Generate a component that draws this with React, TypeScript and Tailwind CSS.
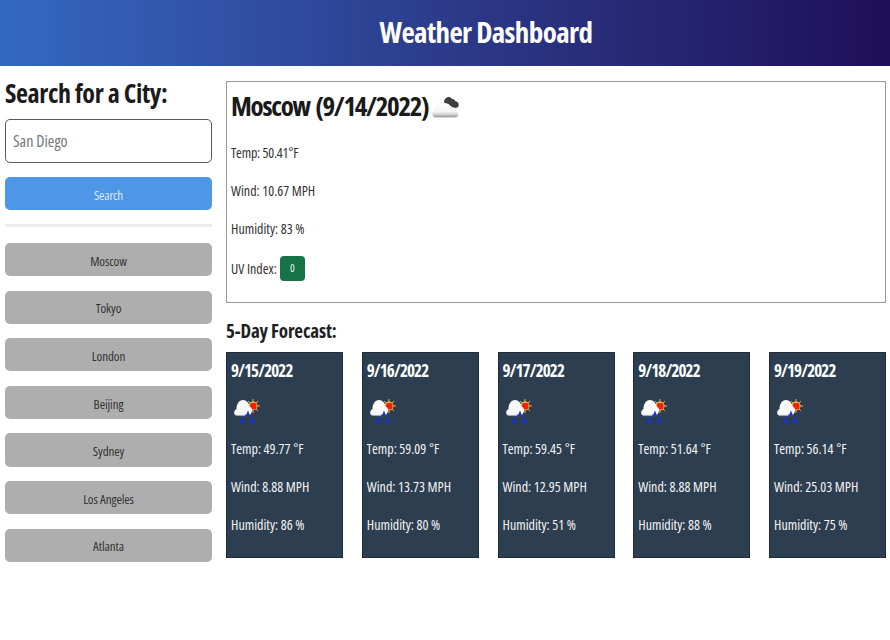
const cities = ["Moscow", "Tokyo", "London", "Beijing", "Sydney", "Los Angeles", "Atlanta"];
const days = [
  { d: "9/15/2022", t: "49.77", w: "8.88", h: "86" },
  { d: "9/16/2022", t: "59.09", w: "13.73", h: "80" },
  { d: "9/17/2022", t: "59.45", w: "12.95", h: "51" },
  { d: "9/18/2022", t: "51.64", w: "8.88", h: "88" },
  { d: "9/19/2022", t: "56.14", w: "25.03", h: "75" },
];

function CloudIcon() {
  return (
    <svg width="30" height="24" viewBox="0 0 30 24" className="block">
      <defs>
        <linearGradient id="wc" x1="0" y1="0" x2="0" y2="1">
          <stop offset="0" stopColor="#ffffff" />
          <stop offset="0.6" stopColor="#f4f4f4" />
          <stop offset="0.8" stopColor="#cfcfcf" />
          <stop offset="1" stopColor="#8c8c8c" />
        </linearGradient>
      </defs>
      <path d="M1 20c-1.500-2 0-4.500 2-5 .5-4 3-7.500 7-8 3.500-.5 6 2 7.500 5 3.500 0 7 2 8.500 5 1 2.500-.5 4.500-2.500 4.500H4c-1.500 0-2.500-.5-3-1.500z" fill="url(#wc)" stroke="#e4e4e4" strokeWidth="0.600" />
      <path d="M12 6.500c0-3 2-5.500 5-5.500 1.500 0 2.500 1 3 2 1.800-.2 3 1 3.500 2.300 2 .3 3.500 2 3.300 4-.2 2-2.300 3-4.300 2.500-2.800-.5-4.500-2.300-6-3.800C15 7.500 13.500 7 12 6.500z" fill="#3f3f3f" />
    </svg>
  );
}

function RainSunIcon() {
  return (
    <svg width="30" height="30" viewBox="0 0 30 30" className="block">
      <g stroke="#e9b04a" strokeWidth="1">
        <path d="M20 2v14M13 9h14M15 4l10 10M25 4L15 14" />
      </g>
      <circle cx="20" cy="9" r="4.500" fill="#f5b93c" />
      <rect x="17" y="6" width="6.500" height="6.500" rx="2" fill="#f0200f" />
      <path d="M3 18.500c-2.500-1-2.500-5 .5-6.500C3.500 7 6 3 10 3c3.500 0 6 3 6.500 6.500 2 .8 3 2.500 2.500 4.500-.5 2.500-2 4.500-4.500 4.500z" fill="#fafafa" />
      <path d="M4 18.500h11" stroke="#a8a8a8" strokeWidth="1.200" />
      <g fill="#1a34c4">
        <path d="M9.300 19l-2.200 5.300a2.200 2.200 0 0 0 4.400 0z" />
        <path d="M15 13.500l-1.800 4.500a1.900 1.900 0 0 0 3.600 0z" />
        <path d="M19 19l-2.200 5.300a2.200 2.200 0 0 0 4.400 0z" />
        <path d="M13 16.500l-1 2.500a1.100 1.100 0 0 0 2 0z" />
      </g>
    </svg>
  );
}

export default function App() {
  return (
    <div className="w-[890px] h-[640px] bg-white text-[#212529] font-['Open_Sans',sans-serif] [font-stretch:75%] overflow-hidden">
      <header className="h-[66px] bg-gradient-to-r from-[#3468c1] to-[#1f0e58] flex items-center justify-center pl-[82px] pb-[4px]">
        <h1 className="text-white font-bold text-[29px] leading-none tracking-[-0.600px]">Weather Dashboard</h1>
      </header>
      <div className="flex pt-[15px]">
        <aside className="w-[207px] ml-[5px] shrink-0">
          <h2 className="font-bold text-[26px] leading-[28px] tracking-[-0.350px] text-[#1b1b1b] mt-[-2px]">Search for a City:</h2>
          <div className="mt-[12px] h-[44px] border border-[#5a5a5a] rounded-[5px] flex items-center px-[7px] text-[16px] text-[#757575]">San Diego</div>
          <button className="mt-[14px] w-full h-[33px] rounded-[5px] bg-[#4e96e6] text-[#dbe8f8] text-[13px] tracking-[-0.200px] pt-[4px]">Search</button>
          <div className="mt-[14px] h-[3px] bg-[#ececec]" />
          <div className="mt-[16px] flex flex-col gap-[14.300px]">
            {cities.map((c) => (
              <button key={c} className="w-full h-[33.300px] rounded-[5px] bg-[#aeaeae] text-[#333333] text-[13px] tracking-[-0.100px] pt-[4px]">{c}</button>
            ))}
          </div>
        </aside>
        <main className="ml-[14px] w-[660px]">
          <section className="h-[222px] border border-[#9a9a9a] px-[4px]">
            <div className="flex items-start h-[52px] pt-[9px]">
              <h2 className="font-bold text-[27px] leading-[30px] tracking-[-1.300px] [word-spacing:2px] text-[#1a1a1a]">Moscow (9/14/2022)</h2>
              <span className="ml-[4px] mt-[5px]"><CloudIcon /></span>
            </div>
            <div className="text-[14px] text-[#333333]">
              <p className="h-[38px] leading-[38px] tracking-[-0.200px]">Temp: 50.41°F</p>
              <p className="h-[38px] leading-[38px]">Wind: 10.67 MPH</p>
              <p className="h-[38px] leading-[38px]">Humidity: 83 %</p>
              <div className="flex items-center h-[38px] gap-[3px] pt-[3px]">
                <span>UV Index:</span>
                <span className="w-[25px] h-[25px] rounded-[4px] bg-[#157347] text-[#e6f2ec] text-[11px] flex items-center justify-center">0</span>
              </div>
            </div>
          </section>
          <h3 className="mt-[16px] font-bold text-[19px] leading-[24px] tracking-[-0.150px] text-[#1f1f1f]">5-Day Forecast:</h3>
          <div className="mt-[9px] flex justify-between">
            {days.map((x) => (
              <div key={x.d} className="w-[117px] h-[206px] bg-[#2c3e50] border border-[#1f2d3a] px-[4px] text-white">
                <div className="font-bold text-[17px] leading-[34px] tracking-[-0.900px] pt-[1px]">{x.d}</div>
                <div className="mt-[9px] h-[28px] ml-[2px]"><RainSunIcon /></div>
                <div className="mt-[5px] text-[14px] text-[#f4f4f4]">
                  <p className="h-[38px] leading-[38px]">Temp: {x.t} °F</p>
                  <p className="h-[38px] leading-[38px]">Wind: {x.w} MPH</p>
                  <p className="h-[38px] leading-[38px]">Humidity: {x.h} %</p>
                </div>
              </div>
            ))}
          </div>
        </main>
      </div>
    </div>
  );
}
